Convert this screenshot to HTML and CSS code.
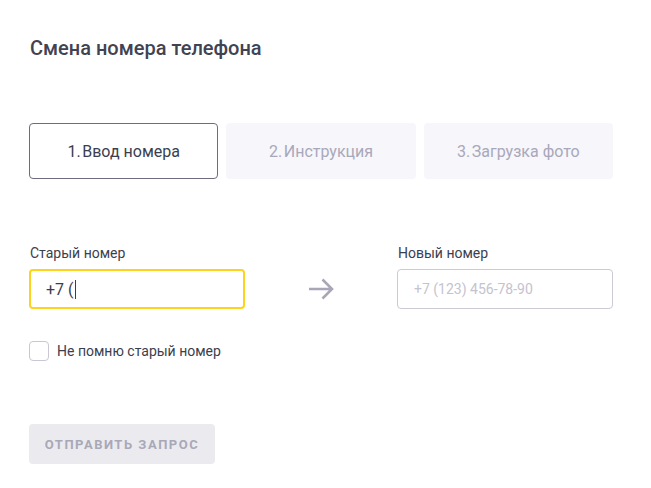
FILE: index.html
```html
<!DOCTYPE html>
<html lang="ru">
<head>
<meta charset="utf-8">
<link rel="stylesheet" href="styles.css">
</head>
<body>
<div class="page">
  <h1 class="title">Смена номера телефона</h1>
  <div class="steps">
    <div class="step active">1.&#8202;Ввод номера</div>
    <div class="step">2.&#8202;Инструкция</div>
    <div class="step">3.&#8202;Загрузка фото</div>
  </div>
  <div class="fields">
    <div class="field">
      <label class="label">Старый номер</label>
      <div class="input focused"><span class="value">+7 (</span><span class="caret"></span></div>
    </div>
    <div class="arrow">
      <svg width="26" height="22" viewBox="0 0 26 22"><path d="M1 11H24M14.5 1.5L24 11L14.5 20.5" fill="none" stroke="#a8a7b7" stroke-width="2.6"/></svg>
    </div>
    <div class="field">
      <label class="label">Новый номер</label>
      <div class="input"><span class="placeholder">+7 (123) 456-78-90</span></div>
    </div>
  </div>
  <label class="check"><span class="box"></span><span class="check-text">Не помню старый номер</span></label>
  <button class="submit">Отправить запрос</button>
</div>
</body>
</html>
```
FILE: styles.css
```css
* { box-sizing: border-box; }
body { margin: 0; background: #fff; font-family: Roboto, "Liberation Sans", sans-serif; color: #3b3e4e; }
.page { padding: 35px 0 0 29px; width: 613px; }
.title { margin: 0; font-size: 20px; line-height: 26px; font-weight: 500; color: #414353; padding-left: 1px; }
.steps { display: grid; grid-template-columns: repeat(3, 1fr); gap: 8px; margin-top: 62px; }
.step { height: 56px; border-radius: 4px; background: #f6f6fb; color: #a9a8ba; font-size: 16px; display: flex; align-items: center; justify-content: center; }
.step.active { background: #fff; border: 1px solid #6e6d7f; color: #3b3e4e; }
.fields { display: flex; align-items: flex-end; margin-top: 65px; }
.field { width: 216px; display: flex; flex-direction: column; }
.label { font-size: 14px; line-height: 18px; margin-bottom: 7px; padding-left: 1px; color: #3b3e4e; }
.input { height: 40px; border: 1px solid #cbcad5; border-radius: 4px; display: flex; align-items: center; padding-left: 16px; font-size: 14px; }
.input.focused { border: 2px solid #ffd21e; padding-left: 15px; }
.value { color: #3b3e4e; font-size: 16px; }
.caret { width: 1px; height: 19px; background: #3b3e4e; margin-left: 1px; }
.placeholder { color: #c4c3cf; }
.arrow { width: 152px; height: 40px; display: flex; align-items: center; justify-content: center; }
.check { display: flex; align-items: center; gap: 8px; margin-top: 32px; }
.box { width: 20px; height: 20px; border: 1px solid #c8c7d3; border-radius: 4px; }
.check-text { font-size: 14px; color: #3b3e4e; }
.submit { margin-top: 63px; width: 186px; height: 40px; border: 0; border-radius: 4px; background: #ebebef; color: #a9a8b8; font-family: Roboto, "Liberation Sans", sans-serif; font-weight: 700; font-size: 13px; letter-spacing: 1.5px; text-transform: uppercase; padding: 0; }
```
